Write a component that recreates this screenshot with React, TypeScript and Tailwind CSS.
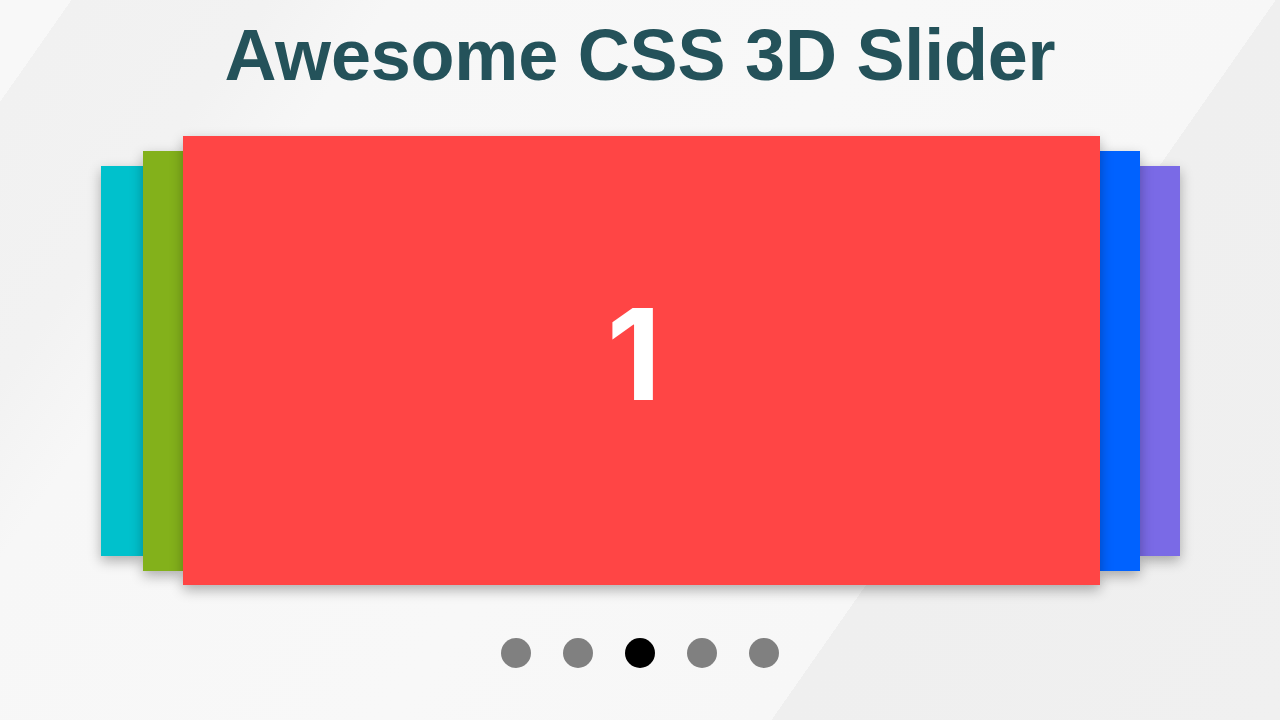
const slides = [
  { id: 5, color: 'bg-[#00c1cc]', size: 'w-[42px] h-[390px]', z: 'z-0' },
  { id: 4, color: 'bg-[#83b11b]', size: 'w-[40px] h-[420px]', z: 'z-10' },
  { id: 1, color: 'bg-[#ff4545]', size: 'w-[917px] h-[449px]', z: 'z-20' },
  { id: 2, color: 'bg-[#0062ff]', size: 'w-[40px] h-[420px]', z: 'z-10' },
  { id: 3, color: 'bg-[#7a6ae6]', size: 'w-[40px] h-[390px]', z: 'z-0' },
];

const dots = [0, 1, 2, 3, 4];
const active = 2;

const App = () => {
  return (
    <main className="flex h-[720px] w-full flex-col items-center overflow-hidden bg-[linear-gradient(125deg,#f8f8f8_0%,#f8f8f8_4%,#f1f1f1_4%,#f2f2f2_15%,#f7f7f7_22%,#f8f8f8_50%,#f7f7f7_71.5%,#efefef_71.5%,#f0f0f0_100%)] font-['Liberation_Sans',Arial,sans-serif]">
      <h1 className="pt-[19px] text-[72px] font-bold leading-[72px] tracking-[-0.2px] text-[#24525a]">
        Awesome CSS 3D Slider
      </h1>

      {/* stacked slides, current one in front */}
      <section className="mt-[45px] flex h-[449px] items-center">
        {slides.map((s) => (
          <div
            key={s.id}
            className={`relative ${s.z} ${s.size} ${s.color} shadow-[0_5px_12px_rgba(0,0,0,0.3)]`}
          >
            {s.id === 1 && (
              <div className="flex h-full items-center justify-center pb-[14px] pr-[14px] font-['Inter',sans-serif] text-[126px] font-bold leading-none text-white">
                1
              </div>
            )}
          </div>
        ))}
      </section>

      <nav className="mt-[53px] flex gap-[32px]">
        {dots.map((d) => (
          <span
            key={d}
            className={d === active ? 'h-[30px] w-[30px] rounded-full bg-black' : 'h-[30px] w-[30px] rounded-full bg-[#808080]'}
          />
        ))}
      </nav>
    </main>
  );
};

export default App;
